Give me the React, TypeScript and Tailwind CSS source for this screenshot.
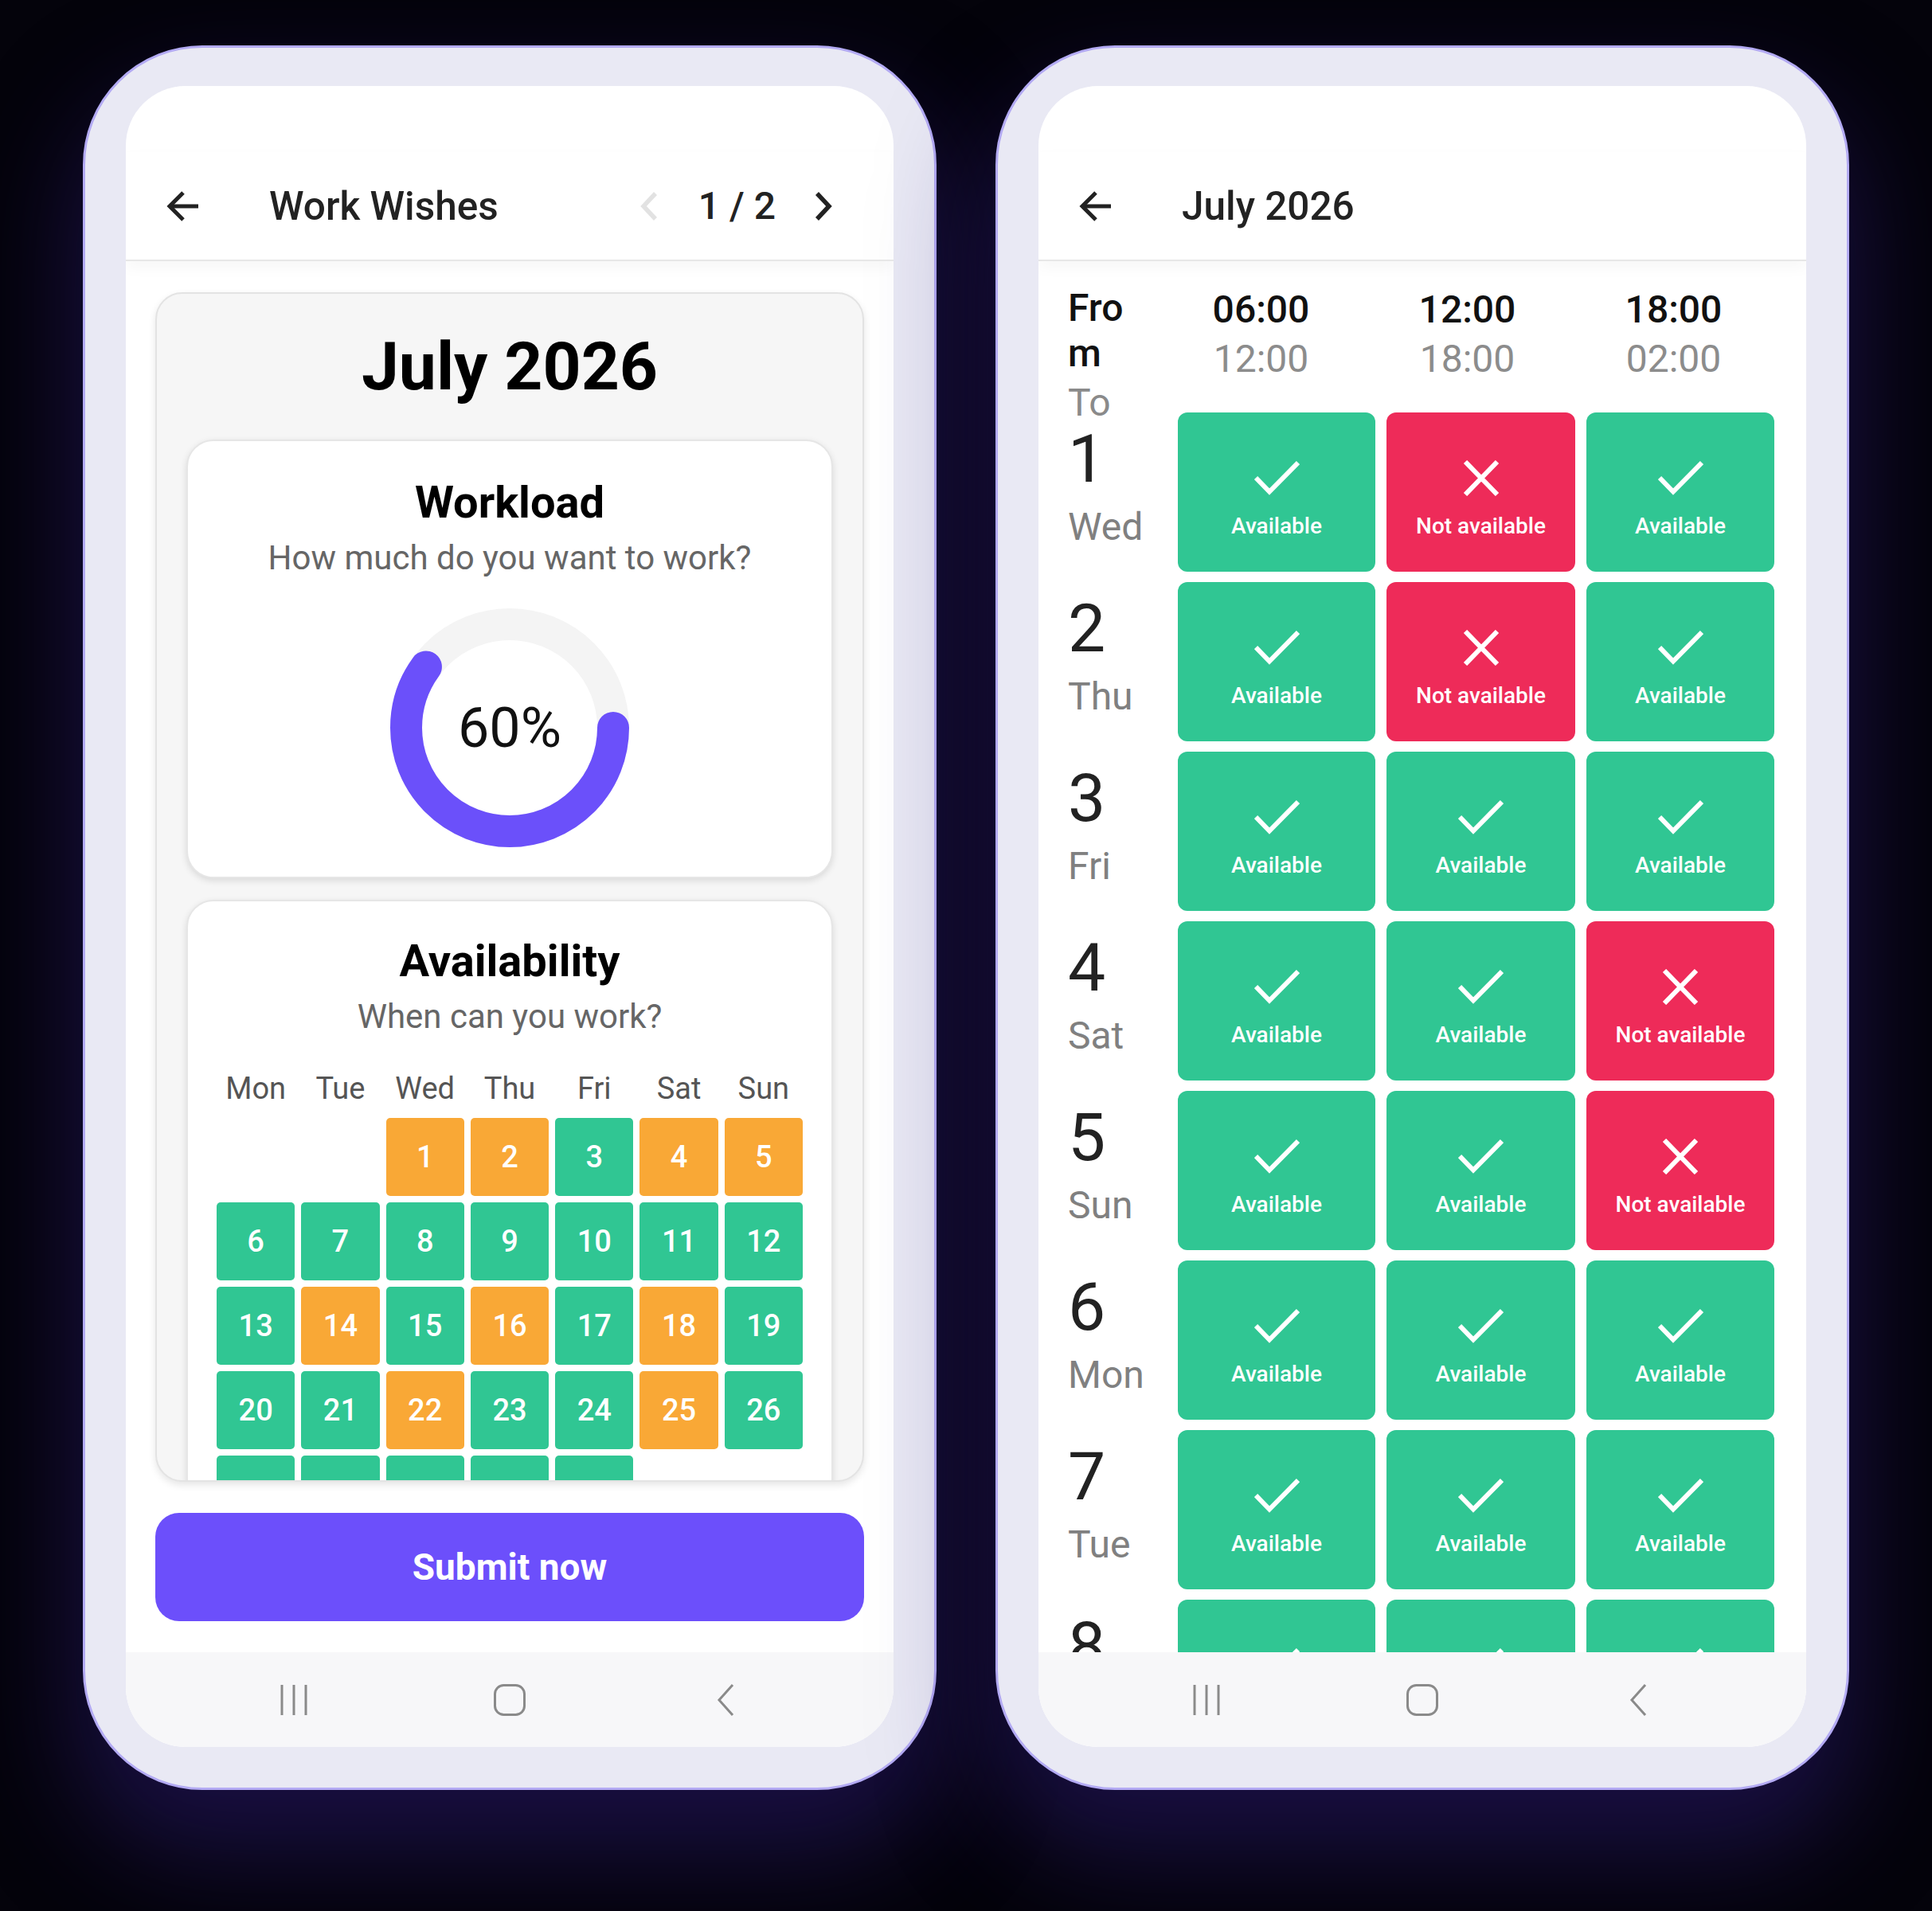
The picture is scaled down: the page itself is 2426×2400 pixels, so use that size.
import React from "react";

type Avail = "A" | "N";

const calendar: { d: number | null; c: "g" | "o" | null }[] = [
  { d: null, c: null },
  { d: null, c: null },
  { d: 1, c: "o" },
  { d: 2, c: "o" },
  { d: 3, c: "g" },
  { d: 4, c: "o" },
  { d: 5, c: "o" },
  { d: 6, c: "g" },
  { d: 7, c: "g" },
  { d: 8, c: "g" },
  { d: 9, c: "g" },
  { d: 10, c: "g" },
  { d: 11, c: "g" },
  { d: 12, c: "g" },
  { d: 13, c: "g" },
  { d: 14, c: "o" },
  { d: 15, c: "g" },
  { d: 16, c: "o" },
  { d: 17, c: "g" },
  { d: 18, c: "o" },
  { d: 19, c: "g" },
  { d: 20, c: "g" },
  { d: 21, c: "g" },
  { d: 22, c: "o" },
  { d: 23, c: "g" },
  { d: 24, c: "g" },
  { d: 25, c: "o" },
  { d: 26, c: "g" },
  { d: 27, c: "g" },
  { d: 28, c: "g" },
  { d: 29, c: "g" },
  { d: 30, c: "g" },
  { d: 31, c: "g" },
];

const rows: { n: number; day: string; s: Avail[] }[] = [
  { n: 1, day: "Wed", s: ["A", "N", "A"] },
  { n: 2, day: "Thu", s: ["A", "N", "A"] },
  { n: 3, day: "Fri", s: ["A", "A", "A"] },
  { n: 4, day: "Sat", s: ["A", "A", "N"] },
  { n: 5, day: "Sun", s: ["A", "A", "N"] },
  { n: 6, day: "Mon", s: ["A", "A", "A"] },
  { n: 7, day: "Tue", s: ["A", "A", "A"] },
  { n: 8, day: "Wed", s: ["A", "A", "A"] },
];

function Phone({ children }: { children: React.ReactNode }) {
  return (
    <div className="w-[1072px] h-[2191px] shrink-0 rounded-[150px] bg-[#e9e9f4] border-[3px] border-[#b3aaf3] pt-[48px] px-[51px] pb-[51px] shadow-[0_70px_130px_10px_rgba(45,28,120,0.5)]">
      <div className="w-full h-full rounded-[75px] bg-white overflow-hidden flex flex-col">
        {children}
      </div>
    </div>
  );
}

function BackArrow() {
  return (
    <svg width="42" height="40" viewBox="0 0 42 40" fill="none">
      <path d="M41 20H5" stroke="#222" strokeWidth="5" />
      <path d="M22 3L5 20L22 37" stroke="#222" strokeWidth="5" />
    </svg>
  );
}

function Header({ title, pager }: { title: string; pager?: boolean }) {
  return (
    <>
      <div className="h-[83px] shrink-0" />
      <div className="h-[137px] shrink-0 flex items-center border-b-2 border-[#e7e7e7] relative z-10 shadow-[0_8px_18px_rgba(0,0,0,0.035)] pl-[50px] pr-[76px]">
        <BackArrow />
        <div className="ml-[88px] text-[49.5px] leading-[58px] font-medium text-[#222]">
          {title}
        </div>
        <div className="flex-1" />
        {pager && (
          <div className="flex items-center">
            <svg width="24" height="36" viewBox="0 0 24 36" fill="none">
              <path d="M20 2L5 18L20 34" stroke="#e2e2e2" strokeWidth="5.5" />
            </svg>
            <div className="ml-[50px] mr-[48px] text-[48px] leading-[58px] font-medium text-[#222]">
              1 / 2
            </div>
            <svg width="24" height="36" viewBox="0 0 24 36" fill="none">
              <path d="M4 2L19 18L4 34" stroke="#222" strokeWidth="5.5" />
            </svg>
          </div>
        )}
      </div>
    </>
  );
}

function NavBar() {
  return (
    <div className="h-[119px] shrink-0 bg-[#f7f7f9] grid grid-cols-3 px-[75px] items-center">
      <div className="flex justify-center">
        <svg width="36" height="40" viewBox="0 0 36 40" fill="none">
          <path d="M3 1V39M18 1V39M33 1V39" stroke="#8a8a8a" strokeWidth="3" />
        </svg>
      </div>
      <div className="flex justify-center">
        <svg width="40" height="40" viewBox="0 0 40 40" fill="none">
          <rect x="1.5" y="1.5" width="37" height="37" rx="11" stroke="#8a8a8a" strokeWidth="3" />
        </svg>
      </div>
      <div className="flex justify-center">
        <svg width="24" height="40" viewBox="0 0 24 40" fill="none">
          <path d="M21 1L4 20L21 39" stroke="#8a8a8a" strokeWidth="3" />
        </svg>
      </div>
    </div>
  );
}

function Donut() {
  const r = 130;
  const c = 2 * Math.PI * r;
  return (
    <div className="relative w-[300px] h-[300px] shrink-0">
      <svg width="300" height="300" viewBox="0 0 300 300" fill="none">
        <circle cx="150" cy="150" r={r} stroke="#f4f4f4" strokeWidth="40" />
        <circle
          cx="150"
          cy="150"
          r={r}
          stroke="#6b50fa"
          strokeWidth="40"
          strokeLinecap="round"
          strokeDasharray={`${c * 0.6} ${c}`}
        />
      </svg>
      <div className="absolute inset-0 flex items-center justify-center text-[70px] leading-none text-[#111]">
        60%
      </div>
    </div>
  );
}

function LeftScreen() {
  const weekdays = ["Mon", "Tue", "Wed", "Thu", "Fri", "Sat", "Sun"];
  return (
    <>
      <Header title="Work Wishes" pager />
      <div className="flex-1 min-h-0 flex flex-col px-[37px] py-[39px] gap-[39px]">
        <div className="flex-1 min-h-0 overflow-hidden rounded-[34px] border-2 border-[#e3e3e3] bg-[#f6f6f6] shadow-[0_4px_10px_rgba(0,0,0,0.10)] px-[37px] pt-[42px]">
          <div className="text-center text-[84px] leading-[100px] font-bold text-black">
            July 2026
          </div>
          <div className="mt-[41px] h-[551px] rounded-[34px] border-2 border-[#e6e6e6] bg-white shadow-[0_3px_8px_rgba(0,0,0,0.12)] flex flex-col items-center pt-[44px]">
            <div className="text-[56px] leading-[66px] font-bold text-black">Workload</div>
            <div className="mt-[12px] text-[42px] leading-[50px] text-[#666]">
              How much do you want to work?
            </div>
            <div className="mt-[38px]">
              <Donut />
            </div>
          </div>
          <div className="mt-[27px] rounded-[34px] border-2 border-[#e6e6e6] bg-white shadow-[0_3px_8px_rgba(0,0,0,0.12)] flex flex-col items-center pt-[42px] pb-[40px] px-[36px]">
            <div className="text-[56px] leading-[66px] font-bold text-black">Availability</div>
            <div className="mt-[12px] text-[42px] leading-[50px] text-[#666]">
              When can you work?
            </div>
            <div className="mt-[42px] w-full grid grid-cols-7 gap-[8px]">
              {weekdays.map((w) => (
                <div key={w} className="text-center text-[38px] leading-[46px] text-[#555]">
                  {w}
                </div>
              ))}
            </div>
            <div className="mt-[14px] w-full grid grid-cols-7 gap-[8px]">
              {calendar.map((c, i) =>
                c.d === null ? (
                  <div key={i} className="h-[98px]" />
                ) : (
                  <div
                    key={i}
                    className={`h-[98px] rounded-[5px] flex items-center justify-center text-white text-[38px] font-medium ${
                      c.c === "o" ? "bg-[#f9a836]" : "bg-[#30c693]"
                    }`}
                  >
                    {c.d}
                  </div>
                )
              )}
            </div>
          </div>
        </div>
        <div className="h-[136px] shrink-0 rounded-[30px] bg-[#6c4ffb] flex items-center justify-center text-white text-[46px] font-bold">
          Submit now
        </div>
      </div>
      <NavBar />
    </>
  );
}

function Check() {
  return (
    <svg width="57" height="45" viewBox="0 0 57 45" fill="none">
      <path d="M2 22L19 39.5L55 3" stroke="white" strokeWidth="6" />
    </svg>
  );
}

function Cross() {
  return (
    <svg width="46" height="45" viewBox="0 0 46 45" fill="none">
      <path d="M3 2L43 43M43 2L3 43" stroke="white" strokeWidth="6" />
    </svg>
  );
}

function Cell({ s }: { s: Avail }) {
  return (
    <div
      className={`h-[200px] rounded-[12px] flex flex-col items-center pt-[60px] ${
        s === "A" ? "bg-[#30c693]" : "bg-[#ee2b59]"
      }`}
    >
      <div className="h-[45px] flex items-center justify-center">
        {s === "A" ? <Check /> : <Cross />}
      </div>
      <div className="mt-[21px] text-[28px] leading-[34px] font-medium text-white">
        {s === "A" ? "Available" : "Not available"}
      </div>
    </div>
  );
}

function RightScreen() {
  const times = [
    ["06:00", "12:00"],
    ["12:00", "18:00"],
    ["18:00", "02:00"],
  ];
  return (
    <>
      <Header title="July 2026" />
      <div className="flex-1 min-h-0 overflow-hidden px-[37px] pt-[30px]">
        <div className="h-[160px] flex items-start">
          <div className="w-[113px] shrink-0">
            <div className="w-[100px] break-all text-[48px] leading-[57px] font-medium text-[#111]">
              From
            </div>
            <div className="text-[48px] leading-[68px] text-[#8a8a8a]">To</div>
          </div>
          {times.map((t, i) => (
            <div key={i} className="w-[259px] shrink-0 text-center">
              <div className="text-[48px] leading-[62px] font-medium text-[#111]">{t[0]}</div>
              <div className="text-[48px] leading-[62px] text-[#8c8c8c]">{t[1]}</div>
            </div>
          ))}
        </div>
        <div className="flex flex-col gap-[13px]">
          {rows.map((r) => (
            <div key={r.n} className="grid grid-cols-[124px_248px_237px_236px] gap-x-[14px] h-[200px]">
              <div className="pt-[17px]">
                <div className="text-[84px] leading-[84px] text-[#222]">{r.n}</div>
                <div className="mt-[14px] text-[48px] leading-[58px] text-[#808080]">{r.day}</div>
              </div>
              {r.s.map((s, i) => (
                <Cell key={i} s={s} />
              ))}
            </div>
          ))}
        </div>
      </div>
      <NavBar />
    </>
  );
}

export default function App() {
  return (
    <div className="w-[2426px] h-[2400px] bg-[#04030b] flex gap-[74px] pl-[104px] pt-[57px] overflow-hidden font-['Roboto',sans-serif]">
      <Phone>
        <LeftScreen />
      </Phone>
      <Phone>
        <RightScreen />
      </Phone>
    </div>
  );
}
